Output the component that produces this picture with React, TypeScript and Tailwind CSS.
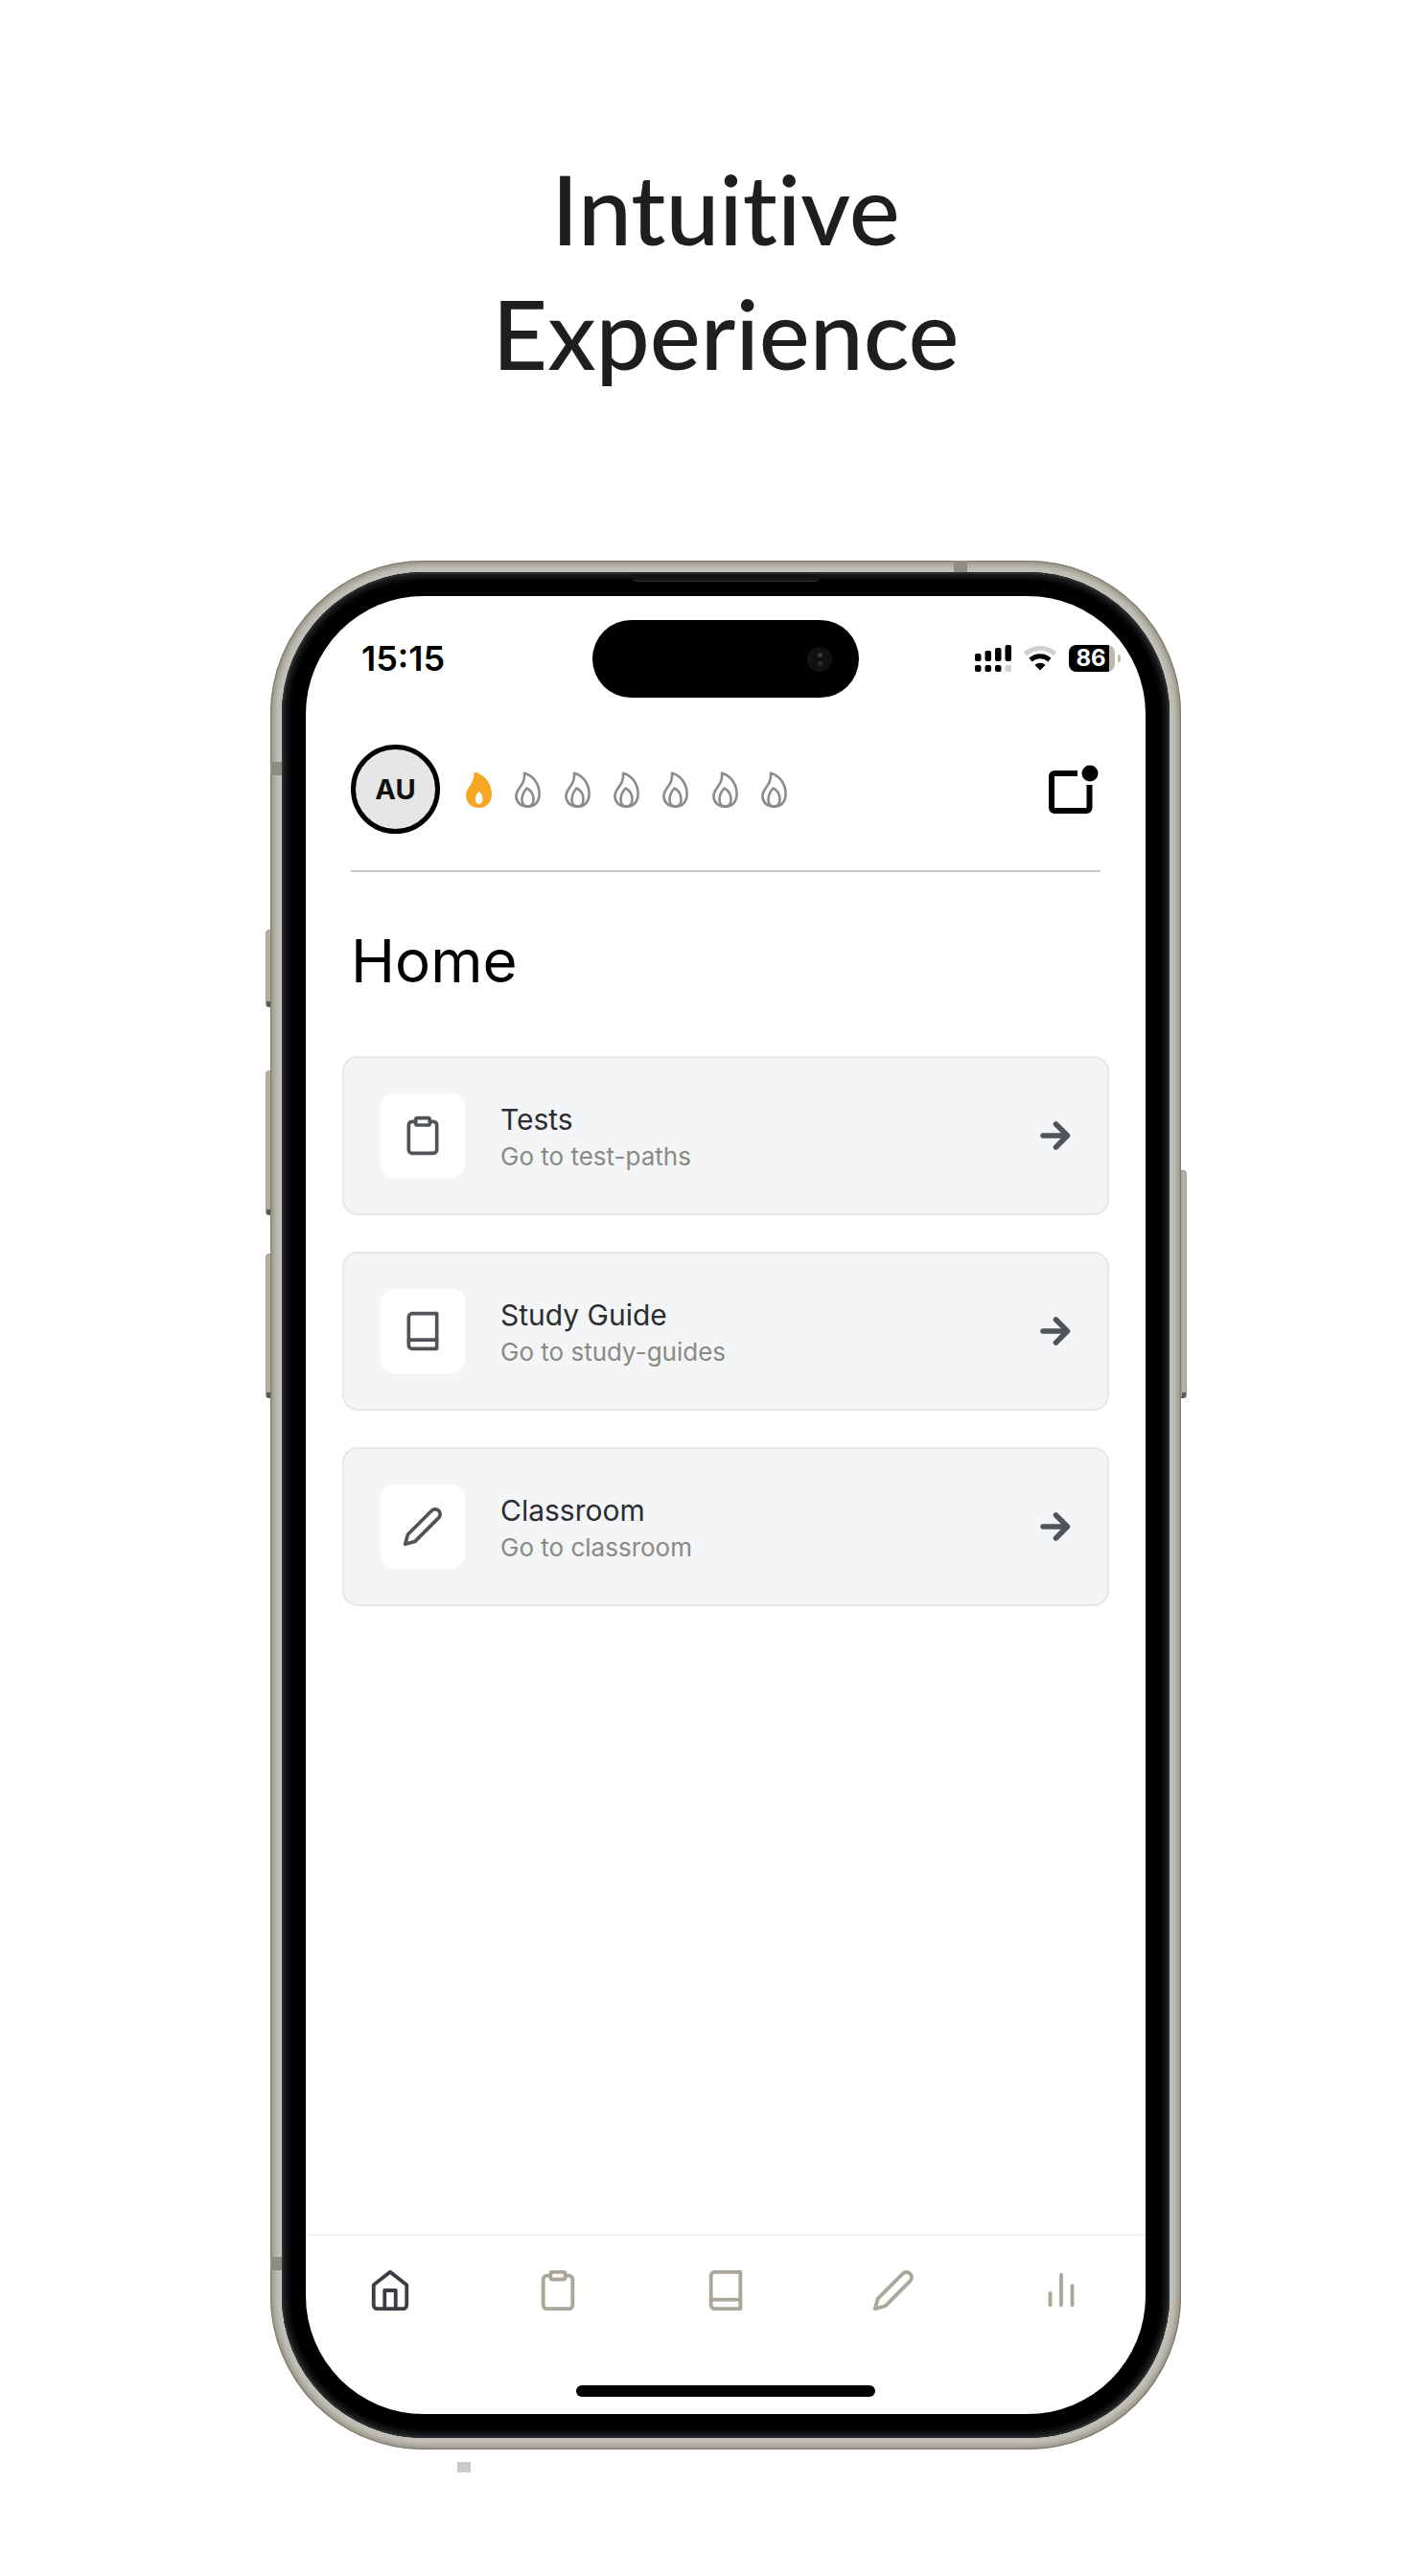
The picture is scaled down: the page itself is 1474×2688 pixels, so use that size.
import React from "react";

type IconProps = { className?: string };

const stroke = {
  fill: "none",
  stroke: "currentColor",
  strokeWidth: 2,
  strokeLinecap: "round" as const,
  strokeLinejoin: "round" as const,
  viewBox: "0 0 24 24",
  "aria-hidden": true,
};

const ClipboardIcon = ({ className }: IconProps) => (
  <svg {...stroke} className={className}>
    <path d="M8 4H6a2 2 0 0 0-2 2v14a2 2 0 0 0 2 2h12a2 2 0 0 0 2-2V6a2 2 0 0 0-2-2h-2" />
    <rect x="8" y="2" width="8" height="4" rx="1" />
  </svg>
);

const BookIcon = ({ className }: IconProps) => (
  <svg {...stroke} className={className}>
    <path d="M20 2H6a2 2 0 0 0-2 2v16a2 2 0 0 0 2 2h14V2z" />
    <path d="M4 17.500L5 17H20" />
  </svg>
);

const PencilIcon = ({ className }: IconProps) => (
  <svg {...stroke} className={className}>
    <path d="M17 3a2.83 2.83 0 1 1 4 4L7.500 20.500 2 22l1.500-5.500L17 3z" />
  </svg>
);

const HomeIcon = ({ className }: IconProps) => (
  <svg {...stroke} className={className}>
    <path d="M3 9l9-7 9 7v11a2 2 0 0 1-2 2H5a2 2 0 0 1-2-2z" />
    <path d="M9 22V12h6v10" />
  </svg>
);

const ChartIcon = ({ className }: IconProps) => (
  <svg {...stroke} className={className}>
    <path d="M18 20V9.500M12 20V3.500M6 20v-6.500" />
  </svg>
);

const ArrowIcon = ({ className }: IconProps) => (
  <svg viewBox="0 0 32 32" className={className} aria-hidden fill="none" stroke="currentColor" strokeWidth="5.500" strokeLinecap="round" strokeLinejoin="round">
    <path d="M3 16h25M16.500 4l12 12-12 12" />
  </svg>
);

const FlameIcon = ({ lit }: { lit: boolean }) => (
  <svg viewBox="0 0 27 38" className="h-[38px] w-[27px]" aria-hidden>
    {lit ? (
      <path
        fill="#f7a823"
        fillRule="evenodd"
        d="M8.500 1.500C8.500 1 9 .5 10 .7 20 3.500 27 13 27 24c0 8-5.500 14-13.500 14S0 32 0 25C0 17 8.500 14 8.500 1.500zM13.500 21c-2.500 2.500-3.500 5-3.500 8 0 3 1.500 5 3.500 5s4-2 4-5c0-4-1.500-6.500-4-8z"
      />
    ) : (
      <g fill="none" stroke="#8b8b88" strokeWidth="2.600" strokeLinejoin="round">
        <path d="M10 1.700C19 4 25.600 13 25.600 23.500 25.600 31.500 21 36.600 13.500 36.600S1.400 32 1.400 25.500C1.400 17.500 11.500 14 10 1.700z" />
        <path d="M12.500 17.500C8.500 22 7.500 25.500 7.500 29.500c0 4.500 2.500 7 6 7s6-2.500 6-7c0-5.500-2.500-10-7-12z" />
      </g>
    )}
  </svg>
);

const cards = [
  { title: "Tests", note: "Go to test-paths", Icon: ClipboardIcon },
  { title: "Study Guide", note: "Go to study-guides", Icon: BookIcon },
  { title: "Classroom", note: "Go to classroom", Icon: PencilIcon },
];

const tabs = [
  { label: "Home", Icon: HomeIcon },
  { label: "Tests", Icon: ClipboardIcon },
  { label: "Study Guide", Icon: BookIcon },
  { label: "Classroom", Icon: PencilIcon },
  { label: "Statistics", Icon: ChartIcon },
];

function StatusBar() {
  return (
    <div className="relative flex h-[130px] items-center justify-between pr-[26px] pl-[58px]">
      <span className="text-[36px] leading-10 font-semibold">15:15</span>
      <div className="absolute top-[25px] left-1/2 flex h-[81px] w-[278px] -translate-x-1/2 items-center justify-end rounded-full bg-black pr-7">
        <div className="flex size-[26px] flex-col items-center justify-center gap-1 rounded-full bg-[#111113]">
          <div className="size-[5px] rounded-full bg-[#3a3a3e]" />
          <div className="size-[5px] rounded-full bg-[#2d2d30]" />
        </div>
      </div>
      <div className="flex items-center gap-3">
        <svg viewBox="0 0 38 28" className="h-7 w-[38px]" aria-hidden>
          <rect x="0" y="9" width="6.500" height="8" rx="2" />
          <rect x="10.500" y="6" width="6.500" height="11" rx="2" />
          <rect x="21" y="3" width="6.500" height="14" rx="2" />
          <rect x="31.500" y="0" width="6.500" height="17" rx="2" />
          <rect x="0" y="21" width="6.500" height="7" rx="2" />
          <rect x="10.500" y="21" width="6.500" height="7" rx="2" />
          <rect x="21" y="21" width="6.500" height="7" rx="2" />
          <rect x="31.500" y="21" width="6.500" height="7" rx="2" fill="#cfcfcf" />
        </svg>
        <svg viewBox="0 0 36 28" className="h-7 w-9" aria-hidden fill="none">
          <path d="M2.500 9.500C11 1.500 25 1.500 33.500 9.500" stroke="#cfcfcf" strokeWidth="5" />
          <path d="M8 15.500c6-5 14-5 20 0" stroke="#000" strokeWidth="5" />
          <path d="M12.500 21c3-3 8-3 11 0L18 26.500z" fill="#000" />
        </svg>
        <div className="flex items-center gap-[3px]">
          <div className="flex h-7 w-12 items-center overflow-hidden rounded-lg bg-[#bdb9af]">
            <span className="flex h-full w-[42px] items-center justify-center bg-black pl-1 text-[24px] leading-7 font-bold text-white">
              86
            </span>
          </div>
          <div className="h-2 w-[3px] rounded-r-full bg-[#bdb9af]" />
        </div>
      </div>
    </div>
  );
}

function Screen() {
  return (
    <div className="relative overflow-hidden rounded-[123px] bg-white">
      <StatusBar />
      <header className="mx-[47px] flex items-center border-b-2 border-[#cbcdcc] pt-[25px] pb-[38px]">
        <button className="flex size-[93px] items-center justify-center rounded-full border-[5px] border-black bg-[#e6e6e6] text-[29px] leading-9 font-bold text-[#111]">
          AU
        </button>
        <div className="ml-[27px] flex w-[335px] justify-between" role="img" aria-label="Streak: 1 of 7 days">
          {[true, false, false, false, false, false, false].map((lit, i) => (
            <FlameIcon key={i} lit={lit} />
          ))}
        </div>
        <button aria-label="Notifications" className="mr-[2px] ml-auto">
          <svg viewBox="0 0 52 52" className="size-[52px]" aria-hidden>
            <path d="M30 9H6a3 3 0 0 0-3 3v33a3 3 0 0 0 3 3h33.500a3 3 0 0 0 3-3V21" fill="none" stroke="#000" strokeWidth="6" />
            <circle cx="43" cy="9" r="8.500" />
          </svg>
        </button>
      </header>
      <main className="min-h-[1421px] px-[38px]">
        <h2 className="px-[9px] pt-[57px] text-[62px] leading-[72px] font-normal">Home</h2>
        <ul className="mt-[63px] flex flex-col gap-[38px]">
          {cards.map(({ title, note, Icon }) => (
            <li key={title}>
              <a href="#" className="flex items-center rounded-2xl border-2 border-[#e5e7e9] bg-[#f3f5f7] px-[38px] py-[37px]">
                <span className="flex size-[88px] shrink-0 items-center justify-center rounded-[14px] bg-white text-[#505459]">
                  <Icon className="size-11" />
                </span>
                <span className="ml-[37px] flex flex-col gap-[2px] pt-[3px]">
                  <span className="text-[30px] leading-[38px] text-[#2b2d31]">{title}</span>
                  <span className="text-[26px] leading-9 text-[#8a8a84]">{note}</span>
                </span>
                <ArrowIcon className="ml-auto size-8 text-[#505459]" />
              </a>
            </li>
          ))}
        </ul>
      </main>
      <nav aria-label="Main" className="grid grid-cols-5 border-t-2 border-[#f0f0f0] pt-[34px] pb-[76px]">
        {tabs.map(({ label, Icon }, i) => (
          <a key={label} href="#" aria-label={label} className={i === 0 ? "flex justify-center text-[#3a3d42]" : "flex justify-center text-[#aaa699]"}>
            <Icon className="size-[46px]" />
          </a>
        ))}
      </nav>
      <div className="mx-auto mb-[18px] h-3 w-[312px] rounded-full bg-black" />
    </div>
  );
}

const sideKey = "absolute w-[6px] border border-[#a5a294] border-b-[6px] border-b-[#5a5a5c] bg-[#b3b0a2]";

export default function App() {
  return (
    <div className="flex min-h-screen flex-col items-center bg-white pt-[152px] pb-[130px] pl-10 font-['Inter',sans-serif] text-black">
      <h1 className="text-center font-['Lato',sans-serif] text-[100px] leading-[130px] font-medium text-[#1e1e1e] [font-variant-ligatures:none]">
        Intuitive
        <br />
        Experience
      </h1>
      <div className="relative mt-[173px] w-full max-w-[950px]">
        <div className={`${sideKey} top-[385px] -left-[5px] h-[81px] rounded-l-sm`} />
        <div className={`${sideKey} top-[532px] -left-[5px] h-[151px] rounded-l-sm`} />
        <div className={`${sideKey} top-[723px] -left-[5px] h-[151px] rounded-l-sm`} />
        <div className={`${sideKey} top-[636px] -right-[6px] h-[238px] rounded-r-sm`} />
        <div className="relative rounded-[160px] bg-[#c2c1b9] p-3 shadow-[inset_0_0_0_1px_#7f7a6b,inset_0_0_7px_3px_#8b8677]">
          <div className="absolute top-[210px] left-0 h-[14px] w-3 bg-[#8f8d82]" />
          <div className="absolute bottom-[187px] left-0 h-[14px] w-3 bg-[#8f8d82]" />
          <div className="absolute top-0 right-[223px] h-3 w-[14px] bg-[#8f8d82]" />
          <div className="relative rounded-[148px] bg-black p-[25px] shadow-[inset_0_0_0_2px_#2a2c30,inset_0_0_5px_6px_#1b1c1f]">
            <div className="absolute top-[2px] left-1/2 h-[8px] w-[196px] -translate-x-1/2 rounded-b-md border-b border-[#333335] bg-[#141415]" />
            <Screen />
          </div>
        </div>
        <div className="absolute -bottom-6 left-[195px] h-[11px] w-[14px] bg-[#c9cccb]" />
      </div>
    </div>
  );
}
